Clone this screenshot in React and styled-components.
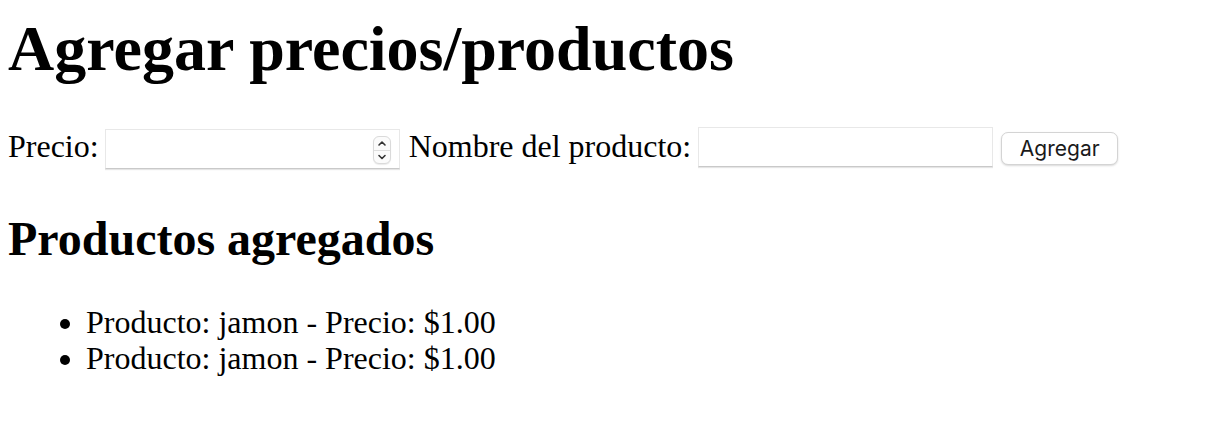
import React, { useState } from "react";
import styled, { createGlobalStyle } from "styled-components";

const GlobalStyle = createGlobalStyle`
  body {
    margin: 8px;
    background: #fff;
    color: #000;
    font-family: "Liberation Serif", "Times New Roman", serif;
    font-size: 32px;
  }
`;

const Title = styled.h1`
  margin: 4px 0 0;
  font-size: 64px;
  line-height: 74px;
  font-weight: bold;
`;

const Form = styled.form`
  margin: 41px 0 0;
  line-height: 37px;
`;

const Label = styled.label`
  margin-right: ${({ $gap }) => $gap || "8px"};
`;

// overflow: hidden puts the inline-block baseline at its bottom edge,
// so vertical-align sets how far the box sits below the text baseline
const Field = styled.span`
  position: relative;
  display: inline-block;
  overflow: hidden;
  padding-bottom: 2px;
  vertical-align: ${({ $drop }) => $drop || "-12px"};
  margin-right: ${({ $gap }) => $gap || "8px"};
`;

const Input = styled.input`
  box-sizing: border-box;
  display: block;
  width: 295px;
  height: 40px;
  padding: 0 8px;
  border: 1px solid #e8e8e8;
  border-bottom-color: #c9c9c9;
  border-radius: 0;
  box-shadow: 0 1px 1px rgba(0, 0, 0, 0.1);
  background: #fff;
  font-family: "Liberation Serif", serif;
  font-size: 20px;
  outline: none;
  -moz-appearance: textfield;

  &::-webkit-outer-spin-button,
  &::-webkit-inner-spin-button {
    -webkit-appearance: none;
    margin: 0;
  }
`;

const Spinner = styled.span`
  position: absolute;
  right: 9px;
  top: 7px;
  width: 18px;
  height: 28px;
  box-sizing: border-box;
  border: 1px solid #dadada;
  border-radius: 6px;
  background: #fbfbfb;
  box-shadow: 0 1px 1px rgba(0, 0, 0, 0.08);
  display: flex;
  flex-direction: column;
  align-items: center;
  justify-content: space-between;
  pointer-events: none;
`;

const Arrow = styled.svg`
  width: 12px;
  height: 12px;
  display: block;
`;

const Divider = styled.span`
  width: 100%;
  height: 1px;
  background: #dedede;
`;

const Button = styled.button`
  box-sizing: border-box;
  width: 117px;
  height: 33px;
  padding: 0;
  border: 1px solid #d4d4d4;
  border-radius: 7px;
  background: #fff;
  box-shadow: 0 1px 2px rgba(0, 0, 0, 0.15);
  font-family: "Inter", "Noto Sans", sans-serif;
  font-size: 21px;
  color: #1a1a1a;
  vertical-align: 1px;
  cursor: pointer;
`;

const Subtitle = styled.h2`
  margin: 40px 0 0;
  font-size: 48px;
  line-height: 55px;
  font-weight: bold;
`;

const List = styled.ul`
  margin: 38px 0 0;
  padding-left: 78px;
  line-height: 36px;
`;

const Item = styled.li``;

const App = () => {
  const [precio, setPrecio] = useState("");
  const [nombre, setNombre] = useState("");
  const [productos, setProductos] = useState([
    { nombre: "jamon", precio: 1 },
    { nombre: "jamon", precio: 1 },
  ]);

  const handleSubmit = (e) => {
    e.preventDefault();
    if (!nombre || !precio) return;
    setProductos([...productos, { nombre, precio: parseFloat(precio) }]);
    setPrecio("");
    setNombre("");
  };

  return (
    <>
      <GlobalStyle />
      <Title>Agregar precios/productos</Title>
      <Form onSubmit={handleSubmit}>
        <Label htmlFor="precio" $gap="6px">Precio:</Label>
        <Field $drop="-14px" $gap="9px">
          <Input
            id="precio"
            type="number"
            value={precio}
            onChange={(e) => setPrecio(e.target.value)}
          />
          <Spinner>
            <Arrow viewBox="0 0 12 12">
              <path d="M3 8 L6 5 L9 8" fill="none" stroke="#333" strokeWidth="1.6" strokeLinecap="round" strokeLinejoin="round" />
            </Arrow>
            <Divider />
            <Arrow viewBox="0 0 12 12">
              <path d="M3 4.5 L6 7.5 L9 4.5" fill="none" stroke="#333" strokeWidth="1.6" strokeLinecap="round" strokeLinejoin="round" />
            </Arrow>
          </Spinner>
        </Field>
        <Label htmlFor="nombre" $gap="7px">Nombre del producto:</Label>
        <Field $drop="-12px">
          <Input
            id="nombre"
            type="text"
            value={nombre}
            onChange={(e) => setNombre(e.target.value)}
          />
        </Field>
        <Button type="submit">Agregar</Button>
      </Form>
      <Subtitle>Productos agregados</Subtitle>
      <List>
        {productos.map((p, i) => (
          <Item key={i}>
            Producto: {p.nombre} - Precio: ${p.precio.toFixed(2)}
          </Item>
        ))}
      </List>
    </>
  );
};

export default App;
